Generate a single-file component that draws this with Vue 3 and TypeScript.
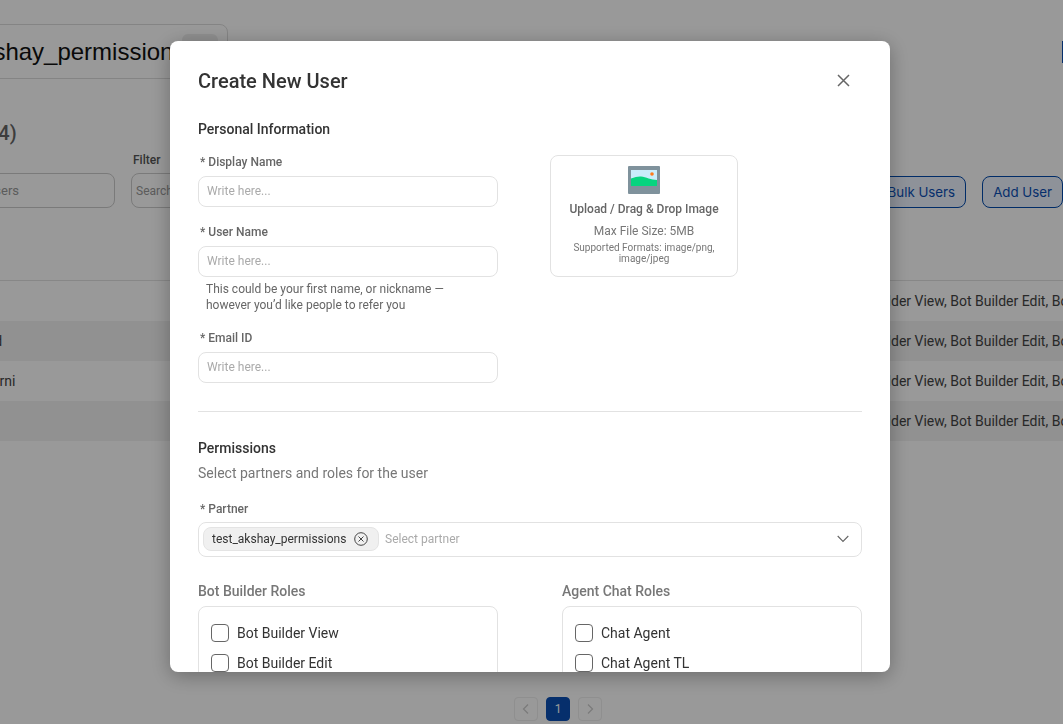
<template>
  <div class="page">
    <div class="top">
      <div class="partner-box">
        <span class="partner-name">test_akshay_permissions</span>
        <span class="partner-btn"></span>
      </div>
      <span class="top-action"></span>
    </div>
    <h2 class="users-title">Users (4)</h2>
    <div class="toolbar">
      <div class="search-box">Search users</div>
      <div class="filter">
        <label>Filter</label>
        <div class="filter-box">Search</div>
      </div>
      <div class="buttons">
        <button class="outline">Add Bulk Users</button>
        <button class="outline">Add User</button>
      </div>
    </div>
    <div class="table">
      <div v-for="(row, i) in rows" :key="i" class="row" :class="{ striped: i % 2 === 1 }">
        <span class="row-name">{{ row }}</span>
        <span class="row-roles">Bot Builder View, Bot Builder Edit, Bot Builder Admin</span>
      </div>
    </div>
    <div class="pager">
      <span class="page-btn">
        <svg width="12" height="12" viewBox="0 0 12 12"><path d="M8 1.500 3.500 6 8 10.500" fill="none" stroke="#ccc" stroke-width="1.200" /></svg>
      </span>
      <span class="page-btn active">1</span>
      <span class="page-btn">
        <svg width="12" height="12" viewBox="0 0 12 12"><path d="M4 1.500 8.500 6 4 10.500" fill="none" stroke="#ccc" stroke-width="1.200" /></svg>
      </span>
    </div>
  </div>

  <div class="overlay"></div>

  <div class="modal">
    <div class="modal-head">
      <h1>Create New User</h1>
      <svg class="close" width="13" height="13" viewBox="0 0 13 13">
        <path d="M1 1 12 12M12 1 1 12" fill="none" stroke="#666" stroke-width="1.500" />
      </svg>
    </div>

    <h3 class="section">Personal Information</h3>
    <div class="personal">
      <div class="fields">
        <div class="field">
          <label>* Display Name</label>
          <div class="input">Write here...</div>
        </div>
        <div class="field">
          <label>* User Name</label>
          <div class="input">Write here...</div>
          <p class="hint">This could be your first name, or nickname —<br />however you’d like people to refer you</p>
        </div>
        <div class="field">
          <label>* Email ID</label>
          <div class="input">Write here...</div>
        </div>
      </div>
      <div class="upload">
        <svg width="32" height="28" viewBox="0 0 32 28">
          <rect width="32" height="28" rx="1" fill="#7f929c" />
          <rect x="3" y="4" width="26" height="16" fill="#c9ecfb" />
          <path d="M3 12.500c4-1.500 7-2.200 10-2 5 .5 10 3.500 16 3.500v6H3z" fill="#07d47f" />
          <circle cx="24" cy="8" r="1.800" fill="#ff7a1a" />
        </svg>
        <div class="upload-title">Upload / Drag &amp; Drop Image</div>
        <div class="upload-size">Max File Size: 5MB</div>
        <div class="upload-formats">Supported Formats: image/png, image/jpeg</div>
      </div>
    </div>

    <hr />

    <h3 class="section perm">Permissions</h3>
    <p class="sub">Select partners and roles for the user</p>
    <div class="field">
      <label>* Partner</label>
      <div class="select">
        <span class="tag">
          test_akshay_permissions
          <svg width="14" height="14" viewBox="0 0 14 14">
            <circle cx="7" cy="7" r="6.300" fill="none" stroke="#444" stroke-width="1" />
            <path d="M4.500 4.500 9.500 9.500M9.500 4.500 4.500 9.500" fill="none" stroke="#444" stroke-width="1" />
          </svg>
        </span>
        <span class="select-ph">Select partner</span>
        <svg class="chev" width="12" height="8" viewBox="0 0 12 8"><path d="M.7 1 6 6.500 11.300 1" fill="none" stroke="#666" stroke-width="1.100" /></svg>
      </div>
    </div>

    <div class="roles">
      <div v-for="group in roleGroups" :key="group.title" class="role-group">
        <h4>{{ group.title }}</h4>
        <div class="role-box">
          <label v-for="role in group.roles" :key="role" class="role">
            <span class="check"></span>{{ role }}
          </label>
        </div>
      </div>
    </div>
  </div>
</template>

<script setup lang="ts">
const rows: string[] = ["", "Said", "Aparni", ""];

const roleGroups = [
  { title: "Bot Builder Roles", roles: ["Bot Builder View", "Bot Builder Edit", "Bot Builder Admin"] },
  { title: "Agent Chat Roles", roles: ["Chat Agent", "Chat Agent TL", "Chat Admin"] },
];
</script>

<style>
html,
body {
  margin: 0;
  height: 100%;
  overflow: hidden;
  background: #fff;
}
</style>

<style scoped>
.page {
  width: 1163px;
  height: 724px;
  margin-left: -100px;
  padding-top: 24px;
  box-sizing: border-box;
  font-family: Roboto, "Liberation Sans", sans-serif;
  color: #333;
  overflow: hidden;
}

.top {
  display: flex;
  align-items: center;
  justify-content: space-between;
}

.partner-box {
  width: 328px;
  height: 55px;
  box-sizing: border-box;
  border: 1px solid #ddd;
  border-radius: 8px;
  padding-left: 15px;
  display: flex;
  align-items: center;
  overflow: hidden;
  font-family: "Liberation Sans", sans-serif;
  font-size: 24px;
  color: #111;
  white-space: nowrap;
  position: relative;
}

.partner-btn {
  position: absolute;
  right: 9px;
  top: 9px;
  width: 36px;
  height: 36px;
  border-radius: 6px;
  background: #eee;
}

.top-action {
  width: 1px;
  height: 22px;
  background: #0a4fb5;
}

.users-title {
  margin: 40px 0 0 35px;
  font-size: 20px;
  line-height: 28px;
  font-weight: 500;
  color: #666;
}

.toolbar {
  display: flex;
  align-items: flex-end;
  margin-top: 6px;
}

.search-box,
.filter-box {
  height: 35px;
  box-sizing: border-box;
  border: 1px solid #ccc;
  border-radius: 8px;
  padding: 0 4px;
  display: flex;
  align-items: center;
  font-size: 12px;
  color: #999;
  white-space: nowrap;
}

.search-box {
  width: 215px;
  padding-left: 43px;
  font-size: 13px;
  flex: none;
}

.filter {
  margin-left: 16px;
  display: flex;
  flex-direction: column;
  gap: 6px;
}

.filter label {
  font-size: 12px;
  line-height: 14px;
  font-weight: 500;
  color: #555;
  margin-left: 2px;
}

.filter-box {
  width: 180px;
}

.buttons {
  margin-left: auto;
  display: flex;
  gap: 16px;
}

.outline {
  height: 32px;
  padding: 0 10px;
  border: 1px solid #004aad;
  border-radius: 8px;
  background: #edf3ff;
  color: #0a4fb5;
  font-family: Inter, sans-serif;
  font-size: 13.300px;
  white-space: nowrap;
}

.table {
  margin-top: 72px;
  border-top: 1px solid #e2e2e2;
}

.row {
  height: 40px;
  display: flex;
  align-items: center;
  white-space: nowrap;
  font-size: 14px;
  color: #444;
  overflow: hidden;
  position: relative;
}

.row.striped {
  background: #f2f2f2;
}

.row-name {
  margin-left: 75px;
}

.row-roles {
  position: absolute;
  left: 943px;
}

.pager {
  display: flex;
  gap: 8px;
  margin-top: 256px;
  margin-left: 614px;
}

.page-btn {
  width: 24px;
  height: 24px;
  box-sizing: border-box;
  border: 1px solid #eee;
  border-radius: 4px;
  display: flex;
  align-items: center;
  justify-content: center;
  font-size: 12px;
}

.page-btn.active {
  background: #0a4fb5;
  border-color: #0a4fb5;
  color: #fff;
}

.overlay {
  position: fixed;
  inset: 0;
  background: rgba(0, 0, 0, 0.4);
}

.modal {
  position: fixed;
  left: 170px;
  top: 41px;
  width: 720px;
  height: 631px;
  box-sizing: border-box;
  padding: 0 28px;
  background: #fff;
  border-radius: 8px;
  box-shadow: 0 4px 20px rgba(0, 0, 0, 0.3);
  overflow: hidden;
  font-family: Roboto, "Liberation Sans", sans-serif;
  color: #333;
}

.modal-head {
  display: flex;
  align-items: center;
  justify-content: space-between;
  height: 80px;
}

.modal-head h1 {
  margin: 0;
  font-size: 20px;
  font-weight: 500;
  color: #333;
}

.close {
  margin: 0 12px 1px 0;
}

.section {
  margin: 0;
  font-size: 14px;
  line-height: 17px;
  font-weight: 500;
  color: #333;
}

.personal {
  display: flex;
  gap: 52px;
  margin-top: 17px;
}

.fields {
  width: 300px;
  display: flex;
  flex-direction: column;
  gap: 18px;
}

.field label {
  display: block;
  font-size: 12px;
  line-height: 14px;
  font-weight: 500;
  color: #666;
  padding-left: 2px;
  margin-bottom: 7px;
}

.input {
  height: 31px;
  box-sizing: border-box;
  border: 1px solid #e2e2e2;
  border-radius: 8px;
  padding: 0 8px 1px;
  display: flex;
  align-items: center;
  font-size: 12px;
  color: #aaa;
}

.hint {
  margin: 4px 0 0;
  padding-left: 8px;
  font-size: 12px;
  line-height: 16px;
  color: #666;
}

.upload {
  width: 188px;
  height: 122px;
  box-sizing: border-box;
  border: 1px solid #e2e2e2;
  border-radius: 8px;
  padding: 10px 12px 0;
  display: flex;
  flex-direction: column;
  align-items: center;
  text-align: center;
}

.upload-title {
  margin-top: 8px;
  font-size: 12px;
  line-height: 15px;
  font-weight: 500;
  color: #666;
}

.upload-size {
  margin-top: 7px;
  font-size: 12px;
  line-height: 15px;
  color: #777;
}

.upload-formats {
  margin-top: 3px;
  font-size: 10px;
  line-height: 11px;
  color: #777;
}

hr {
  margin: 28px 0 0;
  border: 0;
  border-top: 1px solid #e2e2e2;
}

.perm {
  margin-top: 28px;
}

.sub {
  margin: 8px 0 20px;
  font-size: 14px;
  line-height: 17px;
  color: #777;
}

.select {
  height: 35px;
  margin-top: -1px;
  box-sizing: border-box;
  border: 1px solid #e2e2e2;
  border-radius: 8px;
  padding: 0 12px 1px 4px;
  display: flex;
  align-items: center;
  font-size: 12px;
}

.tag {
  height: 24px;
  width: 176px;
  box-sizing: border-box;
  padding: 0 10px 0 8px;
  background: #f0f0f0;
  border: 1px solid #e4e4e4;
  border-radius: 8px;
  display: flex;
  align-items: center;
  justify-content: space-between;
  color: #333;
  white-space: nowrap;
}

.select-ph {
  margin-left: 6px;
  color: #aaa;
}

.chev {
  margin-left: auto;
}

.roles {
  display: flex;
  gap: 64px;
  margin-top: 26px;
}

.role-group {
  width: 300px;
}

.role-group h4 {
  margin: 0 0 6px;
  font-size: 14px;
  line-height: 17px;
  font-weight: 500;
  color: #777;
}

.role-box {
  border: 1px solid #e2e2e2;
  border-radius: 8px;
  padding: 11px 12px;
}

.role {
  display: flex;
  align-items: center;
  height: 30px;
  font-size: 14px;
  color: #333;
}

.check {
  width: 18px;
  height: 18px;
  box-sizing: border-box;
  border: 1px solid #666;
  border-radius: 4px;
  margin-right: 8px;
}
</style>
